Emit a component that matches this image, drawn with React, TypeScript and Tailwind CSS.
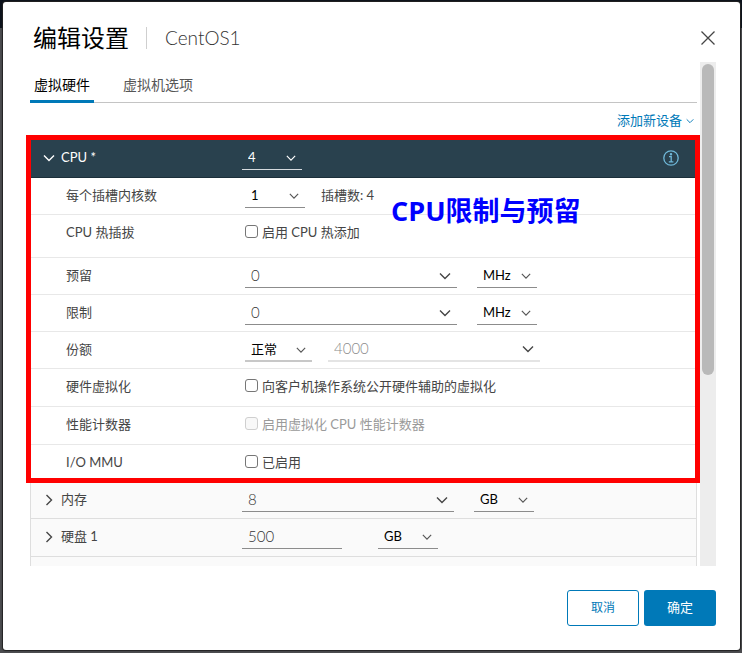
import { useState, type ReactNode } from "react";

const CHEVRONS = {
  down: "M1 3.5 6 8.5 11 3.5",
  right: "M3.5 1 8.5 6 3.5 11",
};

function Chevron({ dir = "down", className = "" }: { dir?: "down" | "right"; className?: string }) {
  return (
    <svg viewBox="0 0 12 12" fill="none" stroke="currentColor" strokeWidth="1.4" className={className} aria-hidden="true">
      <path d={CHEVRONS[dir]} />
    </svg>
  );
}

function SelectField({
  label,
  options,
  width = "w-[60px]",
  line = "border-b border-[#8c8c8c]",
  tone = "text-black",
  icon = "text-[#565656]",
}: {
  label: string;
  options: string[];
  width?: string;
  line?: string;
  tone?: string;
  icon?: string;
}) {
  return (
    <div className={`grid h-6 shrink-0 items-center ${width} ${line}`}>
      <select aria-label={label} className={`col-start-1 row-start-1 h-6 w-full appearance-none bg-transparent pl-[6px] outline-none ${tone}`}>
        {options.map((o) => (
          <option key={o} className="text-black">
            {o}
          </option>
        ))}
      </select>
      <Chevron className={`pointer-events-none col-start-1 row-start-1 mr-[6px] size-[10px] justify-self-end ${icon}`} />
    </div>
  );
}

function ComboField({
  id,
  value,
  disabled = false,
  line = "border-b border-[#8c8c8c]",
}: {
  id: string;
  value: string;
  disabled?: boolean;
  line?: string;
}) {
  return (
    <div className={`flex h-6 w-[212px] shrink-0 items-center ${line}`}>
      <input
        id={id}
        aria-label={id}
        defaultValue={value}
        disabled={disabled}
        className="h-6 min-w-0 flex-1 bg-transparent pb-[2px] pl-[6px] text-[15px] font-light text-[#333333] outline-none disabled:text-[#8c8c8c]"
      />
      <button type="button" aria-label="展开" className="mr-[6px] text-[#454545]">
        <Chevron className="size-3" />
      </button>
    </div>
  );
}

function CheckField({ label, disabled = false }: { label: string; disabled?: boolean }) {
  return (
    <label className={`flex h-6 items-center gap-1 ${disabled ? "text-[#9a9a9a]" : "text-[#454545]"}`}>
      <input
        type="checkbox"
        disabled={disabled}
        className="mb-1 size-[13px] appearance-none rounded-[3px] border border-[#767676] bg-white checked:bg-[#0079b8] disabled:border-[#cfcfcf] disabled:bg-[#f8f8f8]"
      />
      {label}
    </label>
  );
}

function DetailRow({ label, children, height = "h-[37px]" }: { label: string; children: ReactNode; height?: string }) {
  return (
    <div className={`flex items-start border-b border-[#e8e8e8] pt-[6px] ${height}`}>
      <div className="w-[215px] shrink-0 pl-9 leading-[22px] text-[#454545]">{label}</div>
      {children}
    </div>
  );
}

function DeviceRow({ label, children, height = "h-[37px]" }: { label: string; children?: ReactNode; height?: string }) {
  return (
    <div className={`flex items-start border-x border-b border-[#dedede] bg-[#fafafa] pt-[6px] ${height}`}>
      <button type="button" className="flex h-6 w-[211px] shrink-0 items-center gap-[6px] pl-3 text-[#454545]">
        <Chevron dir="right" className="size-3" />
        {label}
      </button>
      {children}
    </div>
  );
}

function CpuSection() {
  return (
    <section className="relative bg-white">
      <div className="flex h-[39px] items-center border-b border-[#1b2f3a] bg-[#29414e] text-white">
        <button type="button" className="flex h-6 w-[212px] shrink-0 items-center gap-[6px] pl-[13px]">
          <Chevron className="size-3" />
          CPU *
        </button>
        <SelectField label="CPU" options={["4", "8"]} line="border-b border-[#d5dade]" tone="text-white" icon="text-white" />
        <button type="button" aria-label="信息" className="mr-[18px] ml-auto text-[#6fb8d9]">
          <svg viewBox="0 0 16 16" fill="none" stroke="currentColor" strokeWidth="1.3" className="size-4" aria-hidden="true">
            <circle cx="8" cy="8" r="7.2" />
            <path d="M6 6.6h2.2v5M5.8 11.8h4.6" />
            <circle cx="8" cy="4.2" r=".6" fill="currentColor" />
          </svg>
        </button>
      </div>

      <DetailRow label="每个插槽内核数">
        <SelectField label="每个插槽内核数" options={["1", "2", "4"]} />
        <span className="ml-4 leading-[22px] text-[#454545]">插槽数: 4</span>
      </DetailRow>
      <DetailRow label="CPU 热插拔" height="h-[43px]">
        <CheckField label="启用 CPU 热添加" />
      </DetailRow>
      <DetailRow label="预留">
        <div className="flex gap-5">
          <ComboField id="预留值" value="0" />
          <SelectField label="预留单位" options={["MHz", "GHz"]} />
        </div>
      </DetailRow>
      <DetailRow label="限制">
        <div className="flex gap-5">
          <ComboField id="限制值" value="0" />
          <SelectField label="限制单位" options={["MHz", "GHz"]} />
        </div>
      </DetailRow>
      <DetailRow label="份额">
        <div className="flex gap-4">
          <SelectField label="份额" options={["正常", "低", "高"]} width="w-[67px]" line="border-b-2 border-[#c8c8c8]" />
          <ComboField id="份额值" value="4000" disabled line="border-b-2 border-[#e4e4e4]" />
        </div>
      </DetailRow>
      <DetailRow label="硬件虚拟化" height="h-[38px]">
        <CheckField label="向客户机操作系统公开硬件辅助的虚拟化" />
      </DetailRow>
      <DetailRow label="性能计数器" height="h-[38px]">
        <CheckField label="启用虚拟化 CPU 性能计数器" disabled />
      </DetailRow>
      <DetailRow label="I/O MMU">
        <CheckField label="已启用" />
      </DetailRow>

      <div className="pointer-events-none absolute -top-1 -right-[3px] -bottom-px -left-1 border-5 border-[#ff0000]" />
      <p className="pointer-events-none absolute top-[54px] left-[361px] font-['Open_Sans','Noto_Sans_CJK_SC',sans-serif] text-[27px] leading-9 font-bold whitespace-nowrap text-[#0000ff]">
        CPU限制与预留
      </p>
    </section>
  );
}

export default function App() {
  const [tab, setTab] = useState(0);
  const tabs = ["虚拟硬件", "虚拟机选项"];

  return (
    <div className="flex h-screen bg-linear-to-b from-[#0c121b] from-[28px] to-[#4b4c4f] to-[28px] pt-[2px] pr-[2px] pb-[3px] pl-[3px] font-[Lato,'Noto_Sans_CJK_SC',sans-serif] text-[13px]">
      <main role="dialog" aria-label="编辑设置" className="flex min-w-0 flex-1 flex-col rounded-[3px] bg-white shadow-[0_0_1px_1px_#222]">
        <header className="flex h-[60px] shrink-0 items-center pt-3 pr-6 pl-[30px]">
          <h1 className="text-2xl text-black">编辑设置</h1>
          <div className="ml-[17px] h-[22px] w-px bg-[#cfcfcf]" />
          <h2 className="ml-[18px] text-[19px] font-light text-[#333333]">CentOS1</h2>
          <button type="button" aria-label="关闭" className="ml-auto text-[#454545]">
            <svg viewBox="0 0 16 16" fill="none" stroke="currentColor" strokeWidth="1.3" className="size-4" aria-hidden="true">
              <path d="M1.5 1.5 14.5 14.5M14.5 1.5 1.5 14.5" />
            </svg>
          </button>
        </header>

        <div className="flex min-h-0 flex-1 pr-6">
          <div className="min-w-0 flex-1 overflow-hidden pr-[3px] pl-[27px]">
            <div role="tablist" className="flex h-[41px] gap-[25px] border-b border-[#c4c4c4]">
              {tabs.map((name, i) => (
                <button
                  key={name}
                  type="button"
                  role="tab"
                  aria-selected={tab === i}
                  onClick={() => setTab(i)}
                  className={`-mb-px h-[41px] px-1 pt-2 text-sm ${
                    tab === i ? "border-b-3 border-[#0079b8] text-black" : "border-b-3 border-transparent text-[#565656]"
                  }`}
                >
                  {name}
                </button>
              ))}
            </div>

            <div className="flex h-9 items-center justify-end pr-[3px]">
              <button type="button" className="flex items-center gap-1 text-[#0079b8]">
                添加新设备
                <Chevron className="size-2" />
              </button>
            </div>

            <CpuSection />

            <DeviceRow label="内存">
              <div className="flex gap-5">
                <ComboField id="内存大小" value="8" />
                <SelectField label="内存单位" options={["GB", "MB"]} />
              </div>
            </DeviceRow>
            <DeviceRow label="硬盘 1" height="h-[38px]">
              <div className="flex gap-9">
                <input
                  aria-label="硬盘 1 大小"
                  defaultValue="500"
                  className="h-6 w-[100px] border-b border-[#8c8c8c] bg-transparent pb-[2px] pl-[6px] text-[15px] font-light text-[#333333] outline-none"
                />
                <SelectField label="硬盘单位" options={["GB", "MB"]} />
              </div>
            </DeviceRow>
            <div className="h-10 border-x border-[#dedede] bg-[#fafafa]" />
          </div>

          <div className="w-4 shrink-0 bg-[#ededed] px-[2px] pt-[2px]">
            <div className="h-[62%] rounded-full bg-[#b9b9b9]" />
          </div>
        </div>

        <footer className="flex h-[84px] shrink-0 items-center justify-end gap-[5px] pr-6">
          <button type="button" className="h-9 w-[72px] rounded-[3px] border border-[#0079b8] bg-white text-xs text-[#0079b8]">
            取消
          </button>
          <button type="button" className="h-9 w-[72px] rounded-[3px] bg-[#0079b8] text-[13px] text-white">
            确定
          </button>
        </footer>
      </main>
    </div>
  );
}
